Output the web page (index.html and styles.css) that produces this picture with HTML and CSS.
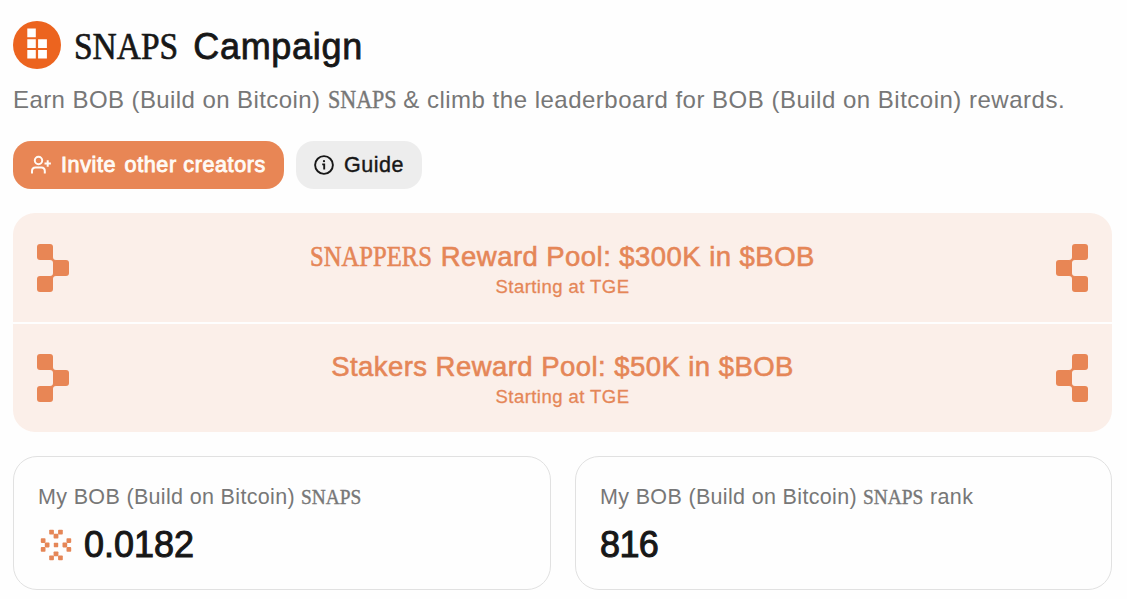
FILE: index.html
```html
<!DOCTYPE html>
<html lang="en">
<head>
<meta charset="utf-8">
<title>SNAPS Campaign</title>
<link rel="stylesheet" href="styles.css">
</head>
<body>
<svg class="defs" width="0" height="0" aria-hidden="true">
  <symbol id="chevron" viewBox="0 0 32 48">
    <rect width="16" height="16" rx="3"/><rect x="16" y="16" width="16" height="16" rx="3"/><rect y="32" width="16" height="16" rx="3"/>
    <path d="M13 16L16 13Q16 16 19 16L16 19Q16 16 13 16ZM13 32Q16 32 16 29L19 32Q16 32 16 35Z"/>
  </symbol>
</svg>
<main class="page">
  <header class="heading">
    <svg class="logo" viewBox="0 0 48 48">
      <circle cx="24" cy="24" r="24" fill="#ec641f"/>
      <path fill="#fff" d="M14.3 7.5h8.5v8.7h-8.5zM14.3 18.2h8.5v8.8h-8.5zM25.1 18.2h8.8v8.8h-8.8zM14.3 29h8.5v8.6h-8.5zM25.1 29h8.8v8.6h-8.8z"/>
    </svg>
    <h1 class="title"><span class="serif">SNAPS</span><span class="title-word">Campaign</span></h1>
  </header>
  <p class="subtitle"><span class="lead">Earn BOB (Build on Bitcoin)</span> <span class="serif">SNAPS</span> &amp; climb the leaderboard for BOB (Build on Bitcoin) rewards.</p>
  <div class="actions">
    <button class="btn btn-primary">
      <svg class="icon" viewBox="0 0 20 20" fill="none" stroke="currentColor" stroke-width="2">
        <circle cx="7.5" cy="5.5" r="3.7"/><path d="M1 18.5V16q0-3.5 3.5-3.5h5.8q3.5 0 3.5 3.5v2.5M16.7 5.3v6.4M13.5 8.5h6.4"/>
      </svg>
      <span class="invite"><span>Invite</span><span>other creators</span></span>
    </button>
    <button class="btn btn-muted">
      <svg class="icon" viewBox="0 0 20 20" fill="none" stroke="currentColor" stroke-width="1.9">
        <circle cx="10" cy="10" r="8.9"/><path d="M8.2 9.4h2v5"/><circle cx="10" cy="6.2" r="1.1" fill="currentColor" stroke="none"/>
      </svg>
      <span>Guide</span>
    </button>
  </div>
  <section class="pools">
    <div class="pool">
      <svg class="chevron"><use href="#chevron"/></svg>
      <div class="pool-text">
        <h2 class="pool-title"><span class="serif">SNAPPERS</span> Reward Pool: $300K in $BOB</h2>
        <p class="pool-note">Starting at TGE</p>
      </div>
      <svg class="chevron flip"><use href="#chevron"/></svg>
    </div>
    <div class="pool">
      <svg class="chevron"><use href="#chevron"/></svg>
      <div class="pool-text">
        <h2 class="pool-title">Stakers Reward Pool: $50K in $BOB</h2>
        <p class="pool-note">Starting at TGE</p>
      </div>
      <svg class="chevron flip"><use href="#chevron"/></svg>
    </div>
  </section>
  <section class="stats">
    <div class="card">
      <p class="label">My BOB (Build on Bitcoin) <span class="serif">SNAPS</span></p>
      <div class="value">
        <svg class="spark" viewBox="0 0 32 32">
          <g id="arm"><rect x="9.2" y=".8" width="4.7" height="4.7" rx=".8"/><rect x="13.6" y="4.8" width="4.8" height="4.7" rx=".8"/><rect x="18.1" y=".8" width="4.7" height="4.7" rx=".8"/></g>
          <use href="#arm" transform="rotate(90 16 16)"/><use href="#arm" transform="rotate(180 16 16)"/><use href="#arm" transform="rotate(270 16 16)"/>
          <rect x="13.8" y="13.8" width="4.4" height="4.4" rx=".6"/>
        </svg>
        <span>0.0182</span>
      </div>
    </div>
    <div class="card">
      <p class="label">My BOB (Build on Bitcoin) <span class="serif">SNAPS</span> rank</p>
      <div class="value value-rank"><span>816</span></div>
    </div>
  </section>
</main>
</body>
</html>
```
FILE: styles.css
```css
* { box-sizing: border-box; }
body {
  margin: 0;
  background: #fefefe;
  color: #171717;
  font-family: "Liberation Sans", Arial, sans-serif;
}
h1, h2, p { margin: 0; font-weight: 400; white-space: nowrap; }
.defs { position: absolute; }
.page { padding: 21px 15px 0 13px; }

/* Condensed serif wordmark; the negative margin takes up the width lost to scaling */
.serif {
  display: inline-block;
  font-family: "Liberation Serif", "Times New Roman", serif;
  letter-spacing: 0;
  line-height: 1;
  transform: scaleX(.88);
  transform-origin: left;
  margin-right: -.37em;
  -webkit-text-stroke: .4px currentColor;
}

.heading { display: flex; align-items: center; gap: 13px; height: 48px; }
.logo { width: 48px; height: 48px; }
.title {
  display: flex;
  align-items: baseline;
  gap: 15px;
  padding-top: 4px;
  font-size: 36px;
  line-height: 44px;
  letter-spacing: .7px;
  -webkit-text-stroke: .8px currentColor;
}
.title .serif { font-size: 38px; -webkit-text-stroke: .7px currentColor; }

.subtitle {
  margin-top: 15px;
  color: #777;
  font-size: 24px;
  line-height: 32px;
  letter-spacing: .5px;
}
.lead { letter-spacing: .42px; }
.subtitle .serif { font-size: 24.5px; transform: scaleX(.9); margin-right: -.32em; }

.actions { display: flex; gap: 12px; margin-top: 25px; }
.btn {
  display: flex;
  align-items: center;
  gap: 10px;
  height: 48px;
  padding: 0 18px;
  border: 0;
  border-radius: 18px;
  font: 21.5px "Liberation Sans", Arial, sans-serif;
  letter-spacing: .55px;
  white-space: nowrap;
}
.btn-primary { width: 271px; background: #e88655; color: #fffaf5; letter-spacing: .62px; -webkit-text-stroke: .9px currentColor; }
.btn-muted { width: 126px; background: #ededed; color: #171717; -webkit-text-stroke: .4px currentColor; }
.icon { width: 20px; height: 20px; flex: none; }
.invite { display: flex; gap: 8.5px; }

.pools {
  display: grid;
  grid-template-rows: 109px 108px;
  gap: 2px;
  margin-top: 24px;
  border-radius: 22px;
  overflow: hidden;
  color: #e58657;
}
.pool { display: flex; justify-content: space-between; align-items: center; padding: 0 24px; background: #fbefe9; }
.chevron { width: 32px; height: 48px; fill: #e88655; }
.flip { transform: scaleX(-1); }
.pool-text { text-align: center; padding-top: 6px; }
.pool-title { font-size: 27.5px; line-height: 32px; letter-spacing: .45px; -webkit-text-stroke: .6px currentColor; }
.pool-title .serif { font-size: 28.5px; transform: scaleX(.865); margin-right: -.65em; -webkit-text-stroke: .6px currentColor; }
.pool-note { font-size: 18.5px; line-height: 28px; letter-spacing: .45px; -webkit-text-stroke: .3px currentColor; }

.stats { display: grid; grid-template-columns: 538px 537px; gap: 24px; margin-top: 24px; }
.card { height: 134px; padding: 24px; border: 1px solid #e1e1e1; border-radius: 24px; }
.label { color: #777; font-size: 21.5px; line-height: 32px; letter-spacing: .34px; }
.label .serif { font-size: 22px; }
.value {
  display: flex;
  align-items: center;
  gap: 12px;
  margin-top: 10px;
  padding-left: 2px;
  font-size: 36px;
  line-height: 44px;
  -webkit-text-stroke: 1px currentColor;
}
.value-rank { padding-left: 0; letter-spacing: -.6px; }
.spark { width: 32px; height: 32px; fill: #e58657; stroke: none; }
```
